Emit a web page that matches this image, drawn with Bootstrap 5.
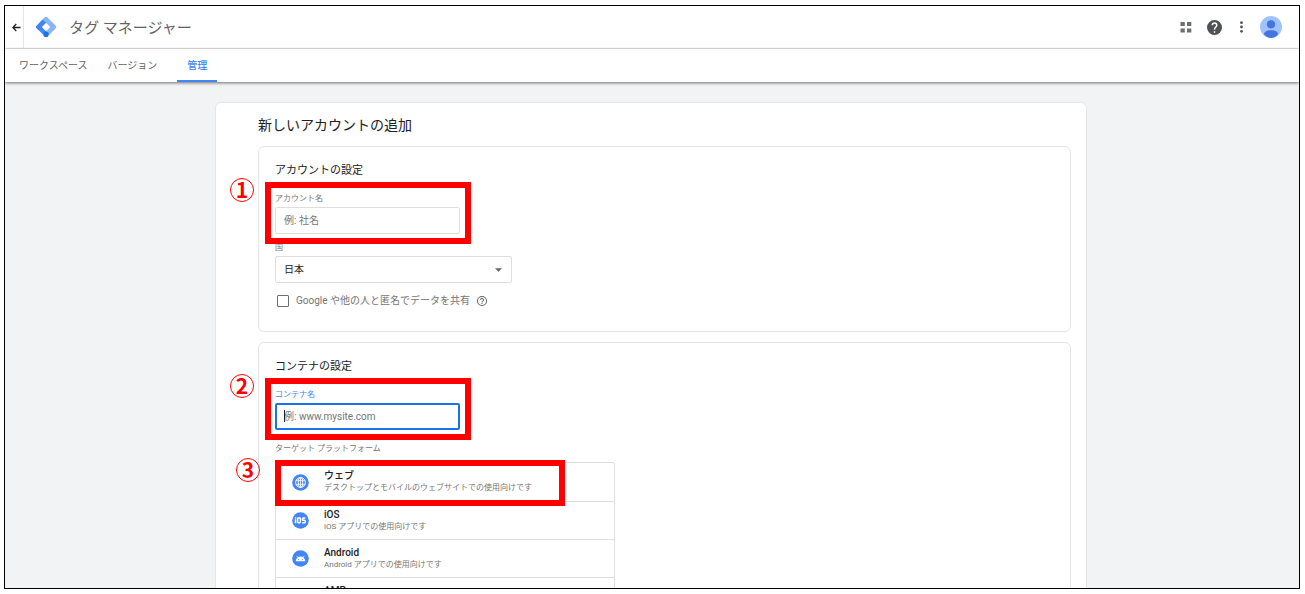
<!DOCTYPE html>
<html lang="ja">
<head>
<meta charset="utf-8">
<meta name="viewport" content="width=device-width, initial-scale=1">
<title>タグ マネージャー</title>
<link href="https://cdn.jsdelivr.net/npm/bootstrap@5.3.0/dist/css/bootstrap.min.css" rel="stylesheet">
<style>
  :root { --line: #e3e5e8; --blue: #4285f4; --ink: #3c4043; --soft: #757575; }
  body { font-family: Roboto, "Noto Sans CJK JP", sans-serif; font-size: 10px; line-height: 16px; color: var(--ink); background: #fff; }
  .page { padding: 5px 5px 5px 4px; height: 100vh; }
  .window-frame { border: 1px solid #000; background: #f1f3f4; height: 100%; }
  .topbar { height: 43px; border-bottom: 1px solid var(--line); }
  .back-btn { width: 19px; padding-right: 2px; border: 0; border-right: 1px solid var(--line); background: none; }
  .logo { margin: 0 12px 0 11px; }
  .brand { font-size: 15px; line-height: 24px; padding-top: 2px; color: #5f6368; }
  .tools { gap: 14px; padding-right: 17px; }
  .tabs { height: 33px; box-shadow: 0 1px 3px rgba(0,0,0,.55); position: relative; }
  .tabs .nav-link { padding: 9px 10px 6px; line-height: 16px; color: #5f6368; border-bottom: 2px solid transparent; }
  .tabs .nav-link.active { color: var(--blue); border-color: var(--blue); font-weight: 500; margin-left: 10px; }
  .content-area { padding-right: 2px; }
  .sheet { max-width: 872px; margin: 20px auto 0; padding: 12px 15px 24px 42px; background: #fff; border: 1px solid var(--line); border-radius: 6px; }
  .sheet h1 { font-size: 14px; line-height: 20px; font-weight: 400; color: #202124; margin: 0 0 11px; }
  .panel { border: 1px solid var(--line); border-radius: 6px; padding: 16px 16px 22px; }
  .panel + .panel { margin-top: 10px; }
  .panel h2 { font-size: 11px; line-height: 16px; font-weight: 400; color: #202124; margin: 0 0 14px; }
  .field { position: relative; width: 185px; }
  .field-wide { width: 237px; margin-top: 8px; }
  .cap { display: block; font-size: 8px; line-height: 12px; margin-bottom: 2px; color: var(--soft); }
  .cap-on { color: var(--blue); }
  .box { font-size: 10px; line-height: 16px; height: 27px; padding: 4px 8px; border: 1px solid #dcdee1; border-radius: 2px; color: #202124; }
  .box::placeholder { color: var(--soft); }
  .box-on { border: 2px solid #1a73e8; padding: 3px 7px; }
  .caret { position: absolute; left: 9px; bottom: 8px; width: 1px; height: 12px; background: #202124; }
  select.box { background-image: url("data:image/svg+xml,%3Csvg xmlns='http://www.w3.org/2000/svg' viewBox='0 0 8 4'%3E%3Cpath d='M0 0h8L4 4z' fill='%23666'/%3E%3C/svg%3E"); background-size: 7px 4px; background-position: right 9px center; }
  .share { margin-top: 10px; gap: 7px; padding-left: 2px; color: var(--soft); }
  .share .form-check-input { width: 12px; height: 12px; margin: 0; border: 1px solid #6b7075; border-radius: 1px; }
  .targets { position: relative; width: 340px; margin-top: 13px; }
  .targets .cap { margin-bottom: 7px; }
  .targets .list-group { --bs-list-group-border-color: #dcdee1; --bs-list-group-border-radius: 2px; position: relative; }
  .target { height: 38px; padding: 0 16px; gap: 15px; }
  .target:first-child { height: 40px; }
  .target strong { display: block; font-size: 10px; line-height: 12px; font-weight: 500; color: #202124; }
  .target small { display: block; font-size: 8px; line-height: 12px; color: var(--soft); }
  .ring { position: absolute; z-index: 3; inset: -11px -11px -10px -10px; border: 6px solid #f00; pointer-events: none; }
  .ring-row { inset: -2px 50px auto 0; height: 46px; }
  .step { position: absolute; right: 100%; top: -10px; margin-right: 17px; width: 24px; height: 24px; border: 1px solid #f00; border-radius: 50%; color: #f00; font: 700 21px/21px "Noto Sans CJK JP", sans-serif; text-align: center; }
  .ring-row .step { margin-right: 21px; top: -8px; }
</style>
</head>
<body>
<div class="page">
  <div class="window-frame overflow-hidden">
    <header class="bg-white">
      <div class="topbar d-flex align-items-center">
        <button type="button" class="back-btn h-100 d-flex align-items-center justify-content-center" aria-label="戻る">
          <svg width="9" height="9" viewBox="0 0 9 9" fill="none" stroke="#202124" stroke-width="1.3"><path d="M8.5 4.5H1M4.3 1 .9 4.5 4.3 8"/></svg>
        </button>
        <svg class="logo" width="22" height="22" viewBox="0 0 22 22">
          <path d="M11 .8 1.2 10.2q-.9.8 0 1.6L8 18.6l3.3-3.3L7 11l7-7z" fill="#4285f4"/>
          <path d="M9.8 1.2q1.2-1 2.4 0l8.6 8.6q1.2 1.2 0 2.4l-7 7-3-3.9L15 11 7.4 3.6z" fill="#8ab4f8"/>
          <path d="M7.4 3.6 11 7l-4 4-3.4 3.2-2.4-2.4q-.9-.8 0-1.6z" fill="#4285f4"/>
          <circle cx="11" cy="18.500" r="2.700" fill="#1a73e8"/>
          <path d="m11 7 4 4-4 4-4-4z" fill="#fff"/>
          <path d="m11 15 2.900 2.900h-5.800z" fill="#1a73e8"/>
        </svg>
        <span class="brand">タグ マネージャー</span>
        <div class="tools ms-auto d-flex align-items-center">
          <button type="button" class="btn p-0 border-0 d-flex" aria-label="アプリ"><svg width="14" height="12" viewBox="0 0 14 12" fill="#6a6d71"><path d="M1.500 1h4.300v4H1.500zM8 1h4.300v4H8zM1.500 7.500h4.300v4H1.500zM8 7.500h4.300v4H8z"/></svg></button>
          <button type="button" class="btn p-0 border-0 d-flex" aria-label="ヘルプ"><svg width="15" height="15" viewBox="2 2 20 20" fill="#4e5256"><path d="M12 2a10 10 0 100 20 10 10 0 000-20zm1 17h-2v-2h2zm2.070-7.750-.9.920C13.450 12.900 13 13.500 13 15h-2v-.5c0-1.100.450-2.100 1.170-2.830l1.240-1.260c.370-.360.590-.860.590-1.410a2 2 0 00-4 0H8a4 4 0 018 0c0 .880-.360 1.680-.930 2.250z"/></svg></button>
          <button type="button" class="btn p-0 border-0 d-flex" aria-label="その他"><svg width="10" height="12" viewBox="0 0 10 12" fill="#4e5256"><circle cx="5.500" cy="1.700" r="1.400"/><circle cx="5.500" cy="6" r="1.400"/><circle cx="5.500" cy="10.300" r="1.400"/></svg></button>
          <button type="button" class="btn p-0 border-0 d-flex" aria-label="アカウント"><svg width="22" height="22" viewBox="0 0 22 22"><circle cx="11" cy="11" r="11" fill="#a0c3ff"/><circle cx="11" cy="8.300" r="4.100" fill="#4374e0"/><path d="M4 18.200C4 15.500 7 14.300 11 14.300s7 1.200 7 3.900C16 20.700 13.500 22 11 22s-5-1.300-7-3.800z" fill="#4374e0"/></svg></button>
        </div>
      </div>
      <nav class="tabs nav bg-white ps-1">
        <a class="nav-link" href="#">ワークスペース</a>
        <a class="nav-link" href="#">バージョン</a>
        <a class="nav-link active" href="#" aria-current="page">管理</a>
      </nav>
    </header>

    <div class="content-area">
    <main class="sheet">
      <h1>新しいアカウントの追加</h1>

      <section class="panel">
        <h2>アカウントの設定</h2>
        <div class="field">
          <label class="cap" for="account">アカウント名</label>
          <input id="account" type="text" class="box form-control" placeholder="例: 社名">
          <div class="ring"><span class="step">1</span></div>
        </div>
        <div class="field field-wide">
          <label class="cap" for="country">国</label>
          <select id="country" class="box form-select"><option>日本</option></select>
        </div>
        <div class="share d-flex align-items-center">
          <input class="form-check-input" type="checkbox" id="share">
          <label for="share">Google や他の人と匿名でデータを共有</label>
          <svg width="10" height="10" viewBox="2 2 20 20" fill="#5f6368"><path d="M11 18h2v-2h-2zm1-16a10 10 0 100 20 10 10 0 000-20zm0 18a8 8 0 110-16 8 8 0 010 16zm0-14a4 4 0 00-4 4h2a2 2 0 014 0c0 2-3 1.750-3 5h2c0-2.250 3-2.500 3-5a4 4 0 00-4-4z"/></svg>
        </div>
      </section>

      <section class="panel">
        <h2>コンテナの設定</h2>
        <div class="field">
          <label class="cap cap-on" for="container-name">コンテナ名</label>
          <input id="container-name" type="text" class="box box-on form-control" placeholder="例: www.mysite.com">
          <span class="caret"></span>
          <div class="ring"><span class="step">2</span></div>
        </div>
        <div class="targets">
          <span class="cap" id="platform-label">ターゲット プラットフォーム</span>
          <div class="list-group" aria-labelledby="platform-label">
            <button type="button" class="target list-group-item list-group-item-action d-flex align-items-center">
              <svg width="17" height="17" viewBox="0 0 17 17"><circle cx="8.500" cy="8.500" r="8.300" fill="#4285f4"/><g fill="none" stroke="#fff"><circle cx="8.500" cy="8.500" r="4.900"/><ellipse cx="8.500" cy="8.500" rx="2.200" ry="4.900"/><path d="M8.500 3.600v9.800M4 6.700h9M4 10.300h9" stroke-width=".8"/></g></svg>
              <span><strong>ウェブ</strong><small>デスクトップとモバイルのウェブサイトでの使用向けです</small></span>
            </button>
            <button type="button" class="target list-group-item list-group-item-action d-flex align-items-center">
              <svg width="17" height="17" viewBox="0 0 17 17"><circle cx="8.500" cy="8.500" r="8.300" fill="#4285f4"/><g fill="none" stroke="#fff" stroke-width="1.500"><path d="M3.500 7.300v4M3.500 5.200v1.200"/><rect x="5.600" y="6" width="2.800" height="4.700" rx=".7"/><path d="M13.400 6h-2.100q-.8 0-.8.800v.7q0 .8.800.8h1.100q.8 0 .8.800v.8q0 .8-.8.800h-2.200"/></g></svg>
              <span><strong>iOS</strong><small>iOS アプリでの使用向けです</small></span>
            </button>
            <button type="button" class="target list-group-item list-group-item-action d-flex align-items-center">
              <svg width="17" height="17" viewBox="0 0 17 17"><circle cx="8.500" cy="8.500" r="8.300" fill="#4285f4"/><path d="M3.700 11.300a4.800 4.800 0 019.600 0z" fill="#fff"/><path d="m6 7.800-1.100-1.900M11 7.800l1.100-1.900" stroke="#fff" stroke-width=".8"/><circle cx="6.500" cy="9.500" r=".5" fill="#4285f4"/><circle cx="10.500" cy="9.500" r=".5" fill="#4285f4"/></svg>
              <span><strong>Android</strong><small>Android アプリでの使用向けです</small></span>
            </button>
            <button type="button" class="target list-group-item list-group-item-action d-flex align-items-center">
              <svg width="17" height="17" viewBox="0 0 17 17"><circle cx="8.500" cy="8.500" r="8.300" fill="#4285f4"/><path d="M9.500 3.500 5.500 9.500H8l-.5 4 4-6H9z" fill="#fff"/></svg>
              <span><strong>AMP</strong><small>AMP での使用向けです</small></span>
            </button>
            <div class="ring ring-row"><span class="step">3</span></div>
          </div>
        </div>
      </section>
    </main>
    </div>
  </div>
</div>
<script src="https://cdn.jsdelivr.net/npm/bootstrap@5.3.0/dist/js/bootstrap.bundle.min.js"></script>
</body>
</html>
